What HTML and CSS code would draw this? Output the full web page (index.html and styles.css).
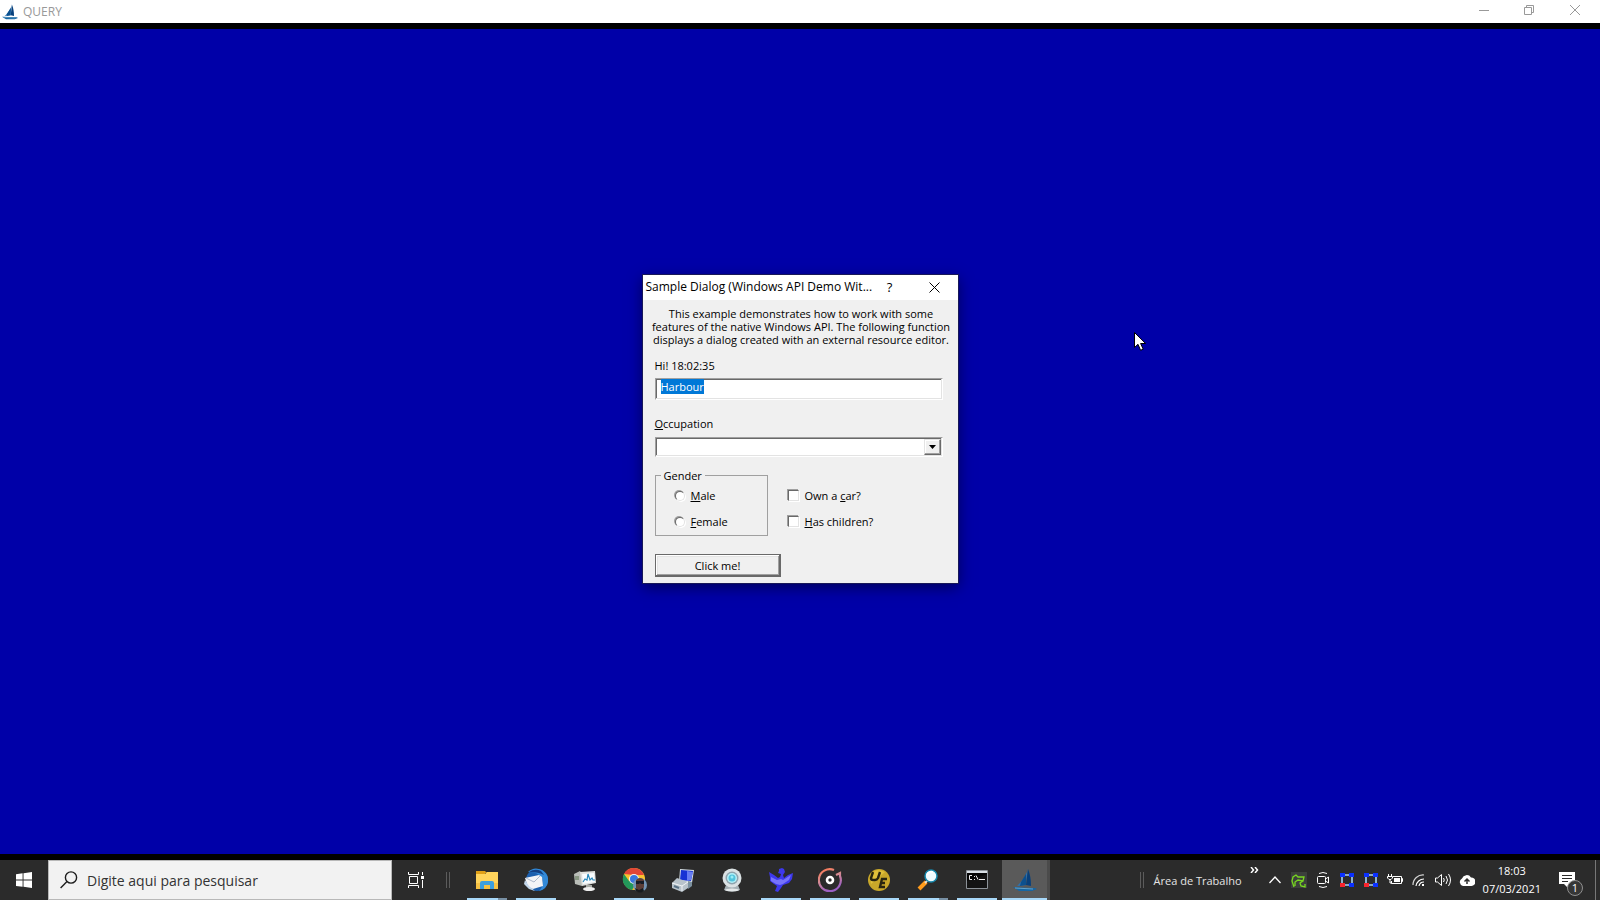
FILE: index.html
```
<!DOCTYPE html>
<html lang="pt-BR">
<head>
    <meta charset="UTF-8">
    <meta name="viewport" content="width=device-width, initial-scale=1.0">
    <title>QUERY</title>
    <link rel="stylesheet" href="styles.css">
</head>
<body>
    <!-- Shared sail boat logo -->
    <svg class="defs" width="0" height="0" aria-hidden="true">
        <symbol id="boat" viewBox="0 0 24 24">
            <path d="M15 0C14 6 10 12 6 16l-2 2 9-1C13 12 14 6 15 0z" fill="#2a72b4"/>
            <path d="M15 1l-2 16 5 1C18 11 17 6 15 1z" fill="#08407c"/>
            <path d="M8 14l5-8v11l-6 1z" fill="#0c508e"/>
            <path d="M0 19l22 1 2 1-5 2H6z" fill="#1766a2"/>
            <path d="M2 20l18 1" stroke="#66a2c8" fill="none"/>
        </symbol>
        <symbol id="nodes" viewBox="0 0 14 14">
            <path d="M2 2h10v10H2z" fill="none" stroke="#a8d4f4" stroke-width="1.6"/>
            <path d="M0 0h5v4H0zM9 0h5v4H9zM9 10h5v4H9z" fill="#0a30ff"/>
            <path d="M0 10h5v4H0z" fill="#f8242c"/>
        </symbol>
    </svg>

    <header class="titlebar">
        <svg class="app-logo" width="16" height="16"><use href="#boat"/></svg>
        <h1 class="app-title">QUERY</h1>
        <div class="window-buttons">
            <button aria-label="Minimizar"><svg width="10" height="10"><path d="M0 5.500h10"/></svg></button>
            <button aria-label="Restaurar"><svg width="10" height="10"><path d="M.5 2.500h7v7h-7zM2.500 2.500v-2h7v7h-2"/></svg></button>
            <button aria-label="Fechar"><svg width="10" height="10"><path d="M0 0l10 10M10 0L0 10"/></svg></button>
        </div>
    </header>

    <main class="screen">
        <form class="dialog" onsubmit="return false">
            <div class="dialog-title">
                <h2>Sample Dialog (Windows API Demo Wit...</h2>
                <button type="button" class="help" aria-label="Help">?</button>
                <button type="button" class="close" aria-label="Close"><svg width="11" height="11"><path d="M.5.5l10 10M10.500.5l-10 10"/></svg></button>
            </div>
            <p class="intro">This example demonstrates how to work with some<br>features of the native Windows API. The following function<br>displays a dialog created with an external resource editor.</p>
            <div class="fields">
                <label class="hi" for="name">Hi! 18:02:35</label>
                <input class="text" type="text" id="name" value="Harbour">
                <label class="occupation" for="job"><u>O</u>ccupation</label>
                <div class="combo">
                    <select id="job"><option></option></select>
                    <span class="combo-button"><svg width="7" height="4"><path d="M0 0h7L3.500 4z"/></svg></span>
                </div>
                <div class="options">
                    <fieldset class="gender">
                        <legend>Gender</legend>
                        <label><input type="radio" name="gender"><span><u>M</u>ale</span></label>
                        <label><input type="radio" name="gender"><span><u>F</u>emale</span></label>
                    </fieldset>
                    <div class="checks">
                        <label><input type="checkbox"><span>Own a <u>c</u>ar?</span></label>
                        <label><input type="checkbox"><span><u>H</u>as children?</span></label>
                    </div>
                </div>
                <button class="click-me" type="button">Click me!</button>
            </div>
        </form>
        <svg class="cursor" width="13" height="20" viewBox="0 0 13 20"><path d="M.5.5v15l3.500-3.200 2.600 6 2.600-1.200-2.600-5.600h5z" fill="#fff" stroke="#000"/></svg>
    </main>

    <footer class="taskbar">
        <button class="start" aria-label="Iniciar">
            <svg width="16" height="16" fill="#fff"><path d="M0 2.200L6.600 1.300v6.300H0zM7.500 1.200L16 0v7.600H7.500zM0 8.400h6.600v6.400L0 13.900zM7.500 8.400H16V16l-8.500-1.200z"/></svg>
        </button>
        <label class="search">
            <svg width="18" height="18" fill="none" stroke="#1c1c1c" stroke-width="1.400"><circle cx="11" cy="6.500" r="5.600"/><path d="M7 10.500L.6 17"/></svg>
            <input type="text" placeholder="Digite aqui para pesquisar" aria-label="Pesquisar">
        </label>
        <button class="taskview" aria-label="Visão de Tarefas">
            <svg width="17" height="16" fill="none" stroke="#fff"><path d="M.5 0v2.500h10V0M.5 16v-2.500h10V16M1.500 4.500h8v7h-8zM14.500 0v3M14.500 8v8"/><path d="M13 4h3v3h-3z" fill="#fff" stroke="none"/></svg>
        </button>
        <span class="grip"></span>
        <nav class="apps">
            <button class="app open stacked" aria-label="Explorador de Arquivos">
                <svg width="24" height="24" viewBox="0 0 24 24"><path d="M1 3h9l2 2h-2v3H1z" fill="#e0a018"/><path d="M1 6h9l2-2h11v17H1z" fill="#ffd45c"/><path d="M1 15h22v6H1z" fill="#f5c144"/><path d="M5 21v-6q0-2 2-2h10q2 0 2 2v6h-4v-4H9v4z" fill="#3c9fdf"/></svg>
            </button>
            <button class="app open" aria-label="Thunderbird">
                <svg width="24" height="24" viewBox="0 0 24 24"><circle cx="13" cy="12" r="11" fill="#1c5fae"/><path d="M4 4Q10-2 18 2q7 4 6 12-1 7-9 9 6-6 3-13-5-7-14-6z" fill="#3289d8"/><path d="M5 4q6-4 12-1l3 4q-5-3-15-3z" fill="#133f82"/><path d="M1 10L15 7l3 2 1 9-10 3-5-2z" fill="#f3f4f7"/><path d="M2 10l8 4 6-6" stroke="#aeb9cc" fill="none"/><path d="M1 12l-1 4 5 5 6 2-6-5z" fill="#c3d7eb"/></svg>
            </button>
            <button class="app" aria-label="Monitor">
                <svg width="24" height="24" viewBox="0 0 24 24"><path d="M1 6l6-3 2 3v12l-7-2z" fill="#b9bdb8"/><path d="M2 9h4M2 11h4" stroke="#56704c"/><path d="M7 4l15-1 1 12-14 3z" fill="#dedfdd"/><path d="M9 6l12-1 1 9-12 2z" fill="#f8fcff"/><path d="M10 14l2-3 2 1 1-6 2 6 2-2 1 2h2" fill="none" stroke="#2889bd" stroke-width="1.200"/><path d="M13 17h6v3h-6z" fill="#a9aca7"/><ellipse cx="16" cy="21" rx="6" ry="2" fill="#eee"/></svg>
            </button>
            <button class="app open" aria-label="Google Chrome">
                <svg width="26" height="26" viewBox="0 0 26 26"><circle cx="13" cy="12" r="11" fill="#f8c22f"/><path d="M3 7a11 11 0 0 1 20 1H13z" fill="#e14637"/><path d="M3 7a11 11 0 0 0 8 16l5-8-8-1z" fill="#23985a"/><circle cx="13" cy="12" r="5" fill="#f4f6fa"/><circle cx="13" cy="12" r="4" fill="#3977df"/><circle cx="19" cy="18" r="7" fill="#7395b5"/><path d="M15 13q4-4 8 0v7l-2 5h-4l-2-4z" fill="#5b3e37"/><path d="M15 14h8v3h-3l-1-1-1 1h-3z" fill="#171c25"/><path d="M14 21l4 2 4-2 1 3q-4 3-8 0z" fill="#171b1e"/></svg>
            </button>
            <button class="app" aria-label="Computador">
                <svg width="24" height="24" viewBox="0 0 24 24"><path d="M9 1l14 1-2 13-13-1z" fill="#d4dde4"/><path d="M10 2l12 1-2 10-11-1z" fill="#1733d4"/><path d="M16 3l6 1-2 8-4 1z" fill="#677df2"/><path d="M1 15l5-5 11 4v6l-6 4-10-4z" fill="#b8c3cb"/><path d="M1 15l10 3 6-4M11 18v5" fill="none" stroke="#f0f3f5"/><path d="M3 18l5 2" stroke="#587286" stroke-width="2"/><path d="M17 13l4 1v4l-4 3z" fill="#7c919f"/></svg>
            </button>
            <button class="app" aria-label="Webcam">
                <svg width="24" height="24" viewBox="0 0 24 24"><path d="M6 17h12l2 5q-8 3-16 0z" fill="#a5b0b5"/><ellipse cx="12" cy="22" rx="7" ry="1.500" fill="#e4e8e9"/><circle cx="12" cy="10" r="9.500" fill="#dbe2e4"/><circle cx="12" cy="10" r="6.500" fill="#8fa4ae"/><circle cx="12" cy="10" r="5" fill="#b3f0f8"/><circle cx="12" cy="10" r="3.500" fill="#53c3dc"/><circle cx="12" cy="9" r="1.500" fill="#9bedf5"/></svg>
            </button>
            <button class="app open" aria-label="Pássaro">
                <svg width="24" height="24" viewBox="0 0 24 24"><path d="M10 1l3-1 2 1 1 3-2 3 1 3 4-3 5-2-1 6-3 4-6 2-2 3-3 4-3-1 2-5-3-2-4-3V9L0 4l5 3 4 3 2-1 1-3-3-1 1-2z" fill="#3d38ec"/><path d="M2 9l6 3 4-1 2 1 8-5-2 5-6 4-3 1-4-1-5-3z" fill="#7774fa"/></svg>
            </button>
            <button class="app open" aria-label="Música">
                <svg width="24" height="24" viewBox="0 0 24 24" fill="none"><defs><linearGradient id="ring" x1="0" y1="0" x2=".4" y2="1"><stop stop-color="#ff7950"/><stop offset=".5" stop-color="#d58b92"/><stop offset="1" stop-color="#9b5ec4"/></linearGradient></defs><path d="M16 2A11 11 0 1 0 22 8V5l-4 2" stroke="url(#ring)" stroke-width="2.200"/><circle cx="12" cy="12" r="3" stroke="#fff" stroke-width="2.600"/></svg>
            </button>
            <button class="app open" aria-label="UltraEdit">
                <svg width="24" height="24" viewBox="0 0 24 24"><circle cx="12" cy="12" r="11" fill="#c9a82a"/><path d="M3 8q5-9 15-4L4 16z" fill="#e0c03a"/><path d="M6 4L4 10q0 2 2 2h2q2 0 3-2l2-6M20 11h-5l-2 8h5M14 15h4" fill="none" stroke="#282510" stroke-width="2.400"/></svg>
            </button>
            <button class="app open stacked" aria-label="Lupa">
                <svg width="24" height="24" viewBox="0 0 24 24"><path d="M3 21l7-7" stroke="#ff9b1b" stroke-width="4"/><path d="M9 15l3-3" stroke="#e7ddd0" stroke-width="2"/><circle cx="15" cy="8" r="6" fill="#f0fbff" stroke="#1688ad" stroke-width="1.500"/><path d="M11 7q2-4 6-3" stroke="#fff" stroke-width="2" fill="none"/></svg>
            </button>
            <button class="app open" aria-label="Prompt de Comando">
                <svg width="24" height="24" viewBox="0 0 24 24"><path d="M1.500 2.500h21v18h-21z" fill="#050505" stroke="#8c9298"/><path d="M2 3h20v2H2z" fill="#d9dfe5"/><path d="M7 7.500H4.500v4H7M9.500 8v1M9.500 11v1M11 7.500l2 4M14 11.500h6" fill="none" stroke="#eee"/><path d="M2 13Q12 10 22 6v14H2z" fill="#fff" fill-opacity=".06"/></svg>
            </button>
            <button class="app open active" aria-label="QUERY">
                <svg width="24" height="24"><use href="#boat"/></svg>
            </button>
        </nav>
        <div class="tray">
            <span class="grip"></span>
            <a class="desk-link" href="#">Área de Trabalho</a>
            <button class="more" aria-label="Mais"><svg width="9" height="6" fill="none" stroke="#fff" stroke-width="1.500"><path d="M1 0l2.500 3L1 6M5 0l2.500 3L5 6"/></svg></button>
            <button class="up" aria-label="Ícones ocultos"><svg width="12" height="8" fill="none" stroke="#fff" stroke-width="1.300"><path d="M.5 7L6 1l5.500 6"/></svg></button>
            <div class="tray-icons">
                <svg width="16" height="16"><path d="M0 0h16v16H0z" fill="#3c403c"/><path d="M3 15L1 9l1-4 3-2 2 2 6 0-1 4-5-1-3 2 0 4M12 9l-3 2 1 3 4 1v-3" fill="none" stroke="#78d820" stroke-width="1.300"/></svg>
                <svg width="16" height="16" fill="none" stroke="#fff"><rect x="2.500" y="4.500" width="8" height="7" rx="1"/><path d="M10.500 7l3-2v6l-3-2M4 1.500Q8-.5 12 1.500M4 14.500q4 2 8 0"/></svg>
                <svg width="16" height="14"><use href="#nodes"/></svg>
                <svg width="16" height="14"><use href="#nodes"/></svg>
                <svg width="16" height="12" fill="none" stroke="#fff"><path d="M6 2.500h8.500v7H4.500V7M14.500 4.500h1v3h-1M1.500 0v2M4.500 0v2M.5 2.500h5V4L4 5.500H2L.5 4zM3 6v3h2"/><path d="M7 4h6v4H7z" fill="#fff" stroke="none"/></svg>
                <svg width="16" height="14" fill="none" stroke="#fff" stroke-width="1.200"><path d="M2 12A10 10 0 0 1 13 2" opacity=".8"/><path d="M5 13a8 8 0 0 1 8-7M8 13a5 5 0 0 1 5-4"/><path d="M11 11h2v2h-2z" fill="#fff" stroke="none"/></svg>
                <svg width="16" height="14" fill="none" stroke="#fff"><path d="M.5 5v4h2L6.500 12.500v-11L2.500 5zM8.500 5q1.500 2 0 4M11 3q3 4 0 8M13.500 1q4 6 0 12"/></svg>
                <svg width="16" height="12"><path d="M4 12a4 4 0 0 1-1-7.500 5 5 0 0 1 9-1A4 4 0 0 1 12.500 12z" fill="#fff"/><path d="M8 10V6M5.500 7.500L8 5l2.500 2.500" fill="none" stroke="#2b2b2b" stroke-width="1.500"/></svg>
            </div>
            <time class="clock" datetime="2021-03-07T18:03">18:03<br>07/03/2021</time>
            <button class="notifications" aria-label="Notificações">
                <svg width="17" height="16"><path d="M0 0h16v12H9v4l-4-4H0z" fill="#fff"/><path d="M3 3.500h10M3 6.500h10M3 9.500h6" stroke="#2b2b2b"/></svg>
                <span class="badge">1</span>
            </button>
            <button class="show-desktop" aria-label="Mostrar área de trabalho"></button>
        </div>
    </footer>
    <script src="script.js"></script>
</body>
</html>
```
FILE: styles.css
```
* {
    box-sizing: border-box;
}

body {
    margin: 0;
    height: 100vh;
    display: flex;
    flex-direction: column;
    font-family: "Open Sans", "Noto Sans", sans-serif;
    font-size: 11px;
    color: #000;
    overflow: hidden;
}

button {
    padding: 0;
    border: 0;
    background: none;
    font: inherit;
    color: inherit;
}

input,
select {
    margin: 0;
    font: inherit;
    border-radius: 0;
    appearance: none;
    outline: none;
}

svg {
    flex: none;
}

.defs {
    position: absolute;
}

/* Main window */
.titlebar {
    flex: none;
    display: flex;
    align-items: center;
    height: 23px;
    padding: 0 2px;
    background: #fff;
}

.app-title {
    flex: 1;
    margin: 0 0 0 5px;
    font-size: 12px;
    font-weight: 400;
    color: #999;
}

.window-buttons {
    display: flex;
    align-self: stretch;
}

.window-buttons button {
    display: flex;
    align-items: center;
    justify-content: center;
    width: 45px;
    padding-bottom: 3px;
}

.window-buttons button:last-child {
    width: 47px;
}

.window-buttons path {
    fill: none;
    stroke: #999;
}

.screen {
    flex: 1;
    display: flex;
    align-items: center;
    justify-content: center;
    position: relative;
    padding-bottom: 26px;
    border: solid #000;
    border-width: 6px 0;
    background: #0000a8;
}

.cursor {
    position: absolute;
    left: 1134px;
    top: 303px;
}

/* Dialog */
.dialog {
    width: 315px;
    background: #f0f0f0;
    box-shadow: 0 0 0 1px #181858, 0 4px 14px rgba(0, 0, 0, 0.5);
    font-weight: 500;
}

.dialog-title {
    display: flex;
    height: 25px;
    padding-left: 3px;
    background: #fff;
}

.dialog-title h2 {
    flex: 1;
    margin: 0;
    font-size: 12px;
    font-weight: 400;
    line-height: 24px;
    white-space: nowrap;
}

.dialog-title button {
    display: flex;
    align-items: center;
    justify-content: center;
}

.help {
    width: 24px;
    font-size: 13px;
}

.close {
    width: 46px;
    margin-left: 10px;
}

.close path {
    stroke: #000;
}

.intro {
    margin: 7px 0 13px;
    padding-left: 2px;
    line-height: 13px;
    text-align: center;
    white-space: nowrap;
}

.fields {
    display: flex;
    flex-direction: column;
    padding: 0 15px 6px 12px;
    line-height: 13px;
}

.text,
.combo {
    border: 1px solid;
    border-color: #a0a0a0 #fff #fff #a0a0a0;
    background: #fff;
    box-shadow: inset -1px -1px #e3e3e3, inset 1px 1px #696969;
}

.text {
    height: 22px;
    margin: 6px 0 17px;
    padding: 1px 5px 5px;
    line-height: 13px;
}

.text::selection {
    background: #0078d7;
    color: #fff;
}

.occupation {
    margin-bottom: 7px;
}

.combo {
    display: flex;
    height: 20px;
    margin-bottom: 12px;
    padding: 1px;
}

.combo select {
    flex: 1;
    border: 0;
    background: transparent;
}

.combo-button {
    display: flex;
    align-items: center;
    justify-content: center;
    width: 17px;
    border: 1px solid;
    border-color: #e3e3e3 #696969 #696969 #e3e3e3;
    background: #f0f0f0;
    box-shadow: inset -1px -1px #a0a0a0, inset 1px 1px #fff;
}

.options {
    display: flex;
    gap: 20px;
    margin-bottom: 18px;
}

.options label {
    display: flex;
    align-items: center;
    gap: 6px;
    height: 26px;
}

.gender {
    width: 113px;
    height: 67px;
    margin: 0;
    padding: 1px 0 0 19px;
    border: 1px solid #a0a0a0;
}

.gender legend {
    margin-left: -14px;
    padding: 0 3px;
}

.checks {
    padding-top: 14px;
}

.options input {
    width: 11px;
    height: 11px;
    border: 1px solid;
    border-color: #696969 #e3e3e3 #e3e3e3 #696969;
    background: #fff;
    box-shadow: 1px 1px #fff, -1px -1px #a0a0a0;
}

.options input[type="radio"] {
    width: 10px;
    height: 10px;
    border-radius: 50%;
}

.click-me {
    width: 126px;
    height: 23px;
    border: 1px solid #696969;
    box-shadow: inset -1px -1px #696969, inset 1px 1px #fff, inset -2px -2px #a0a0a0, inset 2px 2px #e3e3e3;
}

/* Taskbar */
.taskbar {
    flex: none;
    display: flex;
    align-items: center;
    height: 40px;
    background: #2b2b2b;
    color: #fff;
}

.start,
.taskview,
.app {
    display: flex;
    align-items: center;
    justify-content: center;
    width: 48px;
    height: 40px;
}

.search {
    display: flex;
    align-items: center;
    gap: 9px;
    width: 344px;
    height: 40px;
    padding-left: 11px;
    border: 1px solid #b8b8b8;
    background: #f2f2f2;
}

.search input {
    flex: 1;
    padding: 0;
    border: 0;
    background: none;
    font-size: 14px;
}

.search input::placeholder {
    color: #333;
    opacity: 1;
}

.grip {
    width: 4px;
    height: 16px;
    border: solid #5c5c5c;
    border-width: 0 1px;
}

.taskbar > .grip {
    margin: 0 13px 0 6px;
}

.apps {
    display: flex;
    gap: 1px;
}

.app.open {
    background: linear-gradient(#a8d8f8, #a8d8f8) center bottom / 40px 2px no-repeat;
}

.app.stacked {
    background: linear-gradient(90deg, #a8d8f8 31px, #7890a4 31px) center bottom / 40px 2px no-repeat;
}

.app.active {
    border-right: 3px solid #4b4b4b;
    background: linear-gradient(#a8d8f8, #a8d8f8) bottom / 100% 2px no-repeat #5a5a5a;
}

.tray {
    display: flex;
    align-items: center;
    height: 40px;
    margin-left: auto;
}

.desk-link {
    margin-left: 10px;
    color: #e4e4e4;
    font-size: 11px;
    text-decoration: none;
}

.more {
    align-self: flex-start;
    margin: 7px 0 0 8px;
}

.more svg,
.up svg {
    display: block;
}

.up {
    margin: 0 10px;
}

.tray-icons {
    display: flex;
    align-items: center;
    gap: 8px;
}

.clock {
    margin-left: 8px;
    font-size: 11px;
    line-height: 18px;
    text-align: center;
}

.notifications {
    position: relative;
    margin: 0 19px 0 18px;
}

.notifications svg {
    display: block;
}

.badge {
    position: absolute;
    left: 8px;
    top: 8px;
    width: 16px;
    height: 16px;
    border: 1px solid #909090;
    border-radius: 50%;
    background: #363636;
    line-height: 14px;
}

.show-desktop {
    width: 5px;
    height: 40px;
    border-left: 1px solid #777;
}
```
FILE: script.js
```
// Start with the name selected, ready to be typed over
const nameInput = document.getElementById('name');
nameInput.focus();
nameInput.select();
```
